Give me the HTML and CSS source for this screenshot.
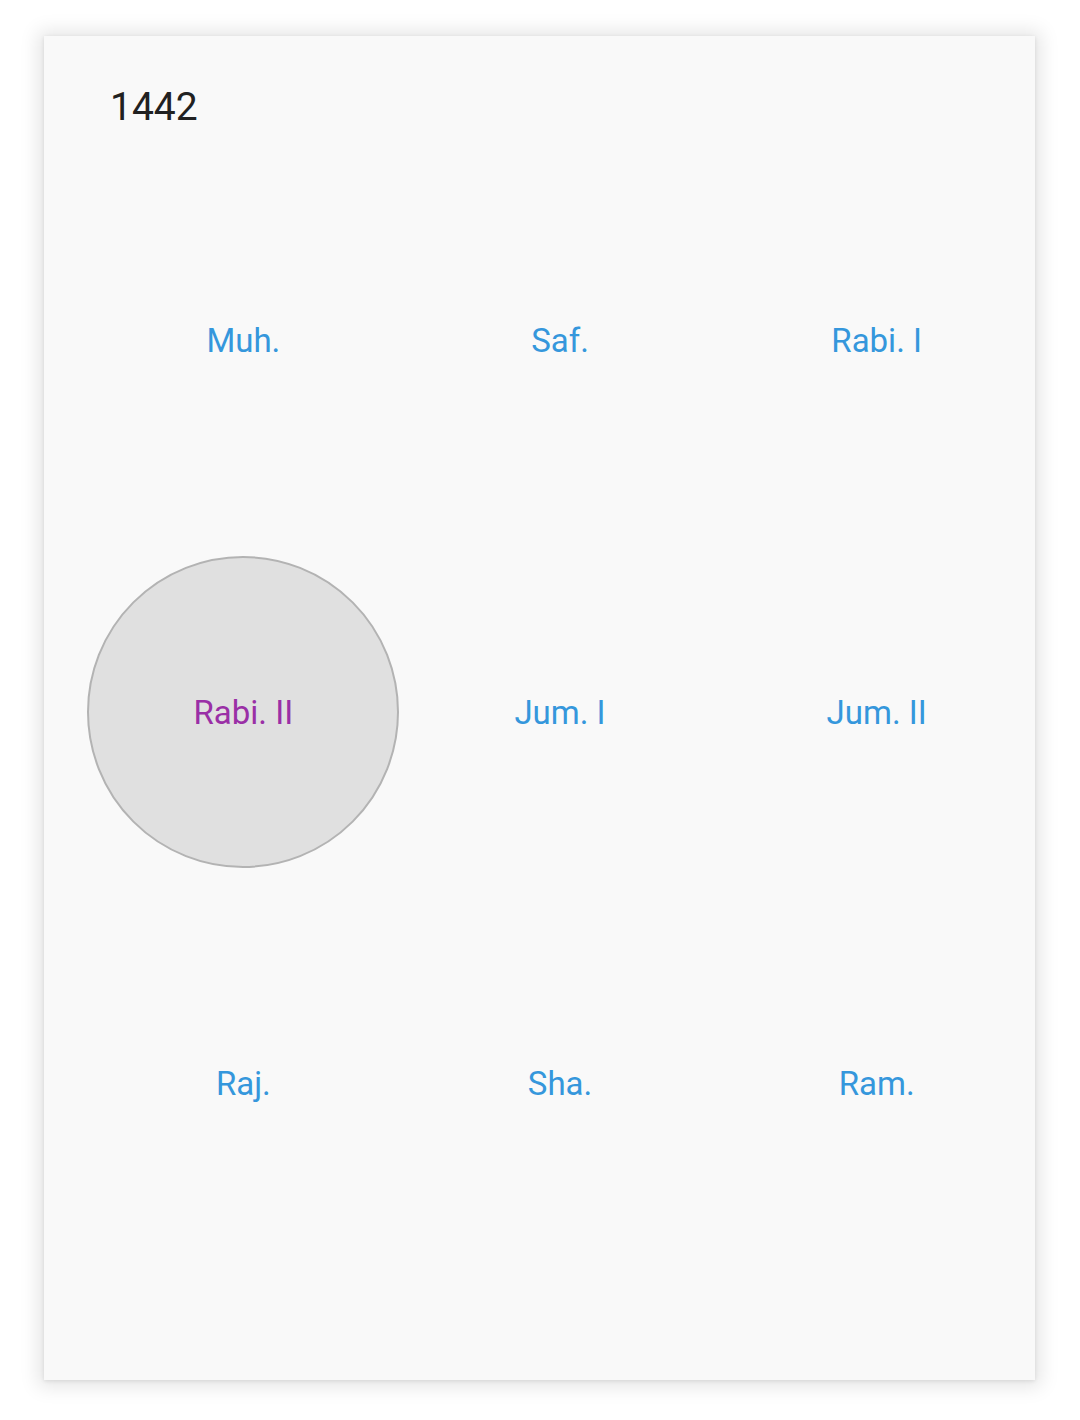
FILE: index.html
```html
<!DOCTYPE html>
<html>
<head>
<meta charset="utf-8">
<link rel="stylesheet" href="styles.css">
</head>
<body>
<div class="card">
  <div class="header"><span class="year">1442</span></div>
  <div class="grid">
    <div class="cell"><span class="month">Muh.</span></div>
    <div class="cell"><span class="month">Saf.</span></div>
    <div class="cell"><span class="month">Rabi. I</span></div>
    <div class="cell"><span class="month selected">Rabi. II</span></div>
    <div class="cell"><span class="month">Jum. I</span></div>
    <div class="cell"><span class="month">Jum. II</span></div>
    <div class="cell"><span class="month">Raj.</span></div>
    <div class="cell"><span class="month">Sha.</span></div>
    <div class="cell"><span class="month">Ram.</span></div>
  </div>
</div>
</body>
</html>
```
FILE: styles.css
```css
html, body {
  margin: 0;
  padding: 0;
  background: #ffffff;
}
body {
  width: 1080px;
  height: 1420px;
  font-family: Roboto, "Noto Sans", sans-serif;
}
.card {
  position: relative;
  margin: 36px 0 0 44px;
  width: 991px;
  height: 1344px;
  background: #f9f9f9;
  box-shadow: 0 1px 4px rgba(0,0,0,0.10), 0 1px 18px 6px rgba(0,0,0,0.10);
  box-sizing: border-box;
}
.header {
  height: 119px;
  box-sizing: border-box;
  padding: 48px 0 0 66px;
}
.year {
  display: block;
  font-size: 39px;
  line-height: 47px;
  color: #212121;
}
.grid {
  display: grid;
  grid-template-columns: repeat(3, 1fr);
  grid-template-rows: repeat(3, 371.5px);
  margin-left: 41px;
}
.cell {
  display: flex;
  align-items: center;
  justify-content: center;
}
.month {
  font-size: 33px;
  color: #3597dc;
}
.month.selected {
  width: 308px;
  height: 308px;
  border-radius: 50%;
  background: #e0e0e0;
  border: 2px solid #b3b3b3;
  display: flex;
  align-items: center;
  justify-content: center;
  color: #9a2fa6;
  flex: none;
}
```
